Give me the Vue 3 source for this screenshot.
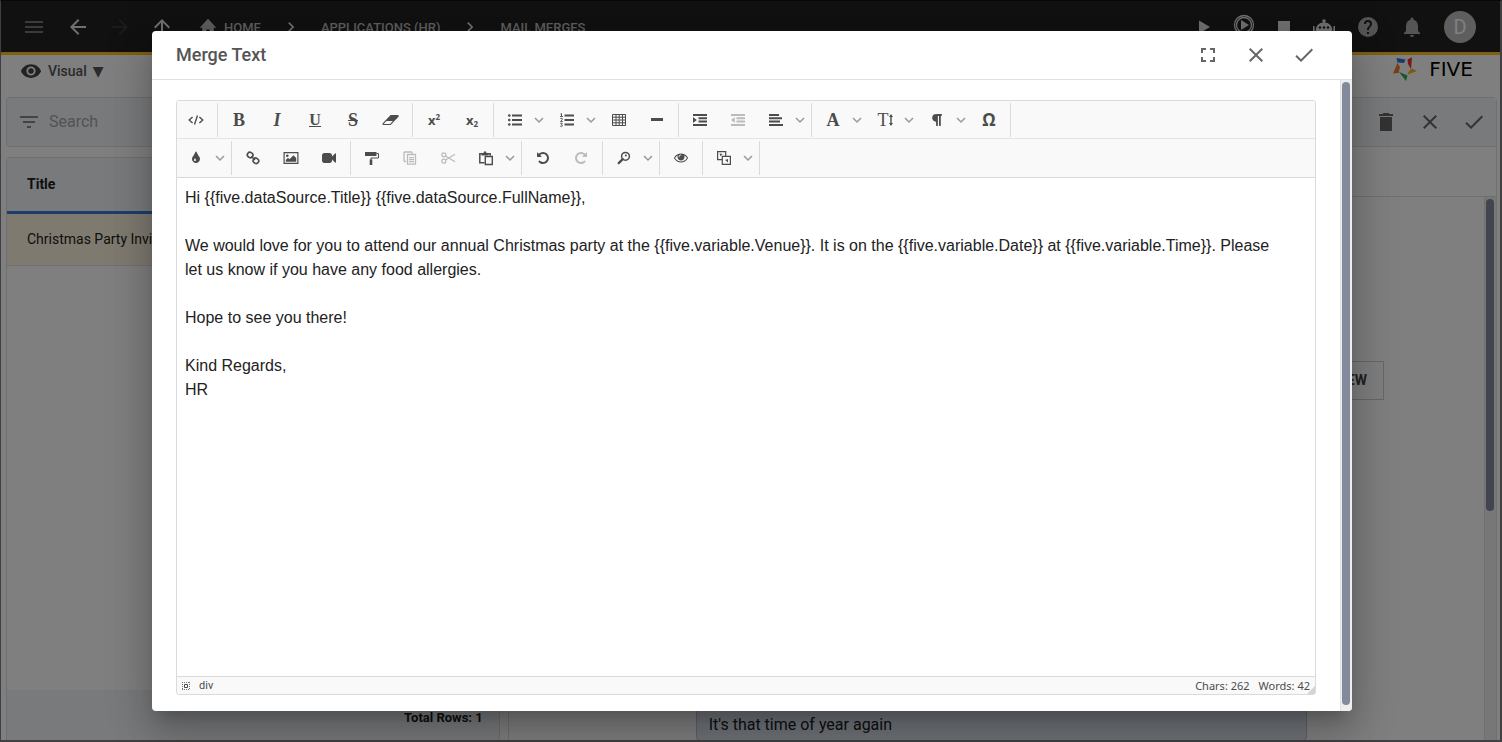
<script setup>
import { ref } from 'vue'

const search = ref('')

const icons = {
  source: '<path d="M4 4L1 7l3 3M10 4l3 3-3 3M8.300 2.500L5.700 11.500" transform="translate(-1 0) scale(1.14 1)" fill="none" stroke="currentColor" stroke-width="1.200"/>',
  eraser: '<path transform="translate(-1 0) scale(.0085 .0078)" d="M832 1408l336-384h-768l-336 384h768zm1013-1077q15 34 9.500 71.500t-30.500 65.500l-896 1024q-38 44-96 44h-768q-38 0-69.500-20.500t-47.500-54.500q-15-34-9.500-71.500t30.500-65.500l896-1024q38-44 96-44h768q38 0 69.500 20.500t47.500 54.500z"/>',
  ul: '<circle cx="1.300" cy="2.500" r="1.300"/><circle cx="1.300" cy="7" r="1.300"/><circle cx="1.300" cy="11.500" r="1.300"/><path d="M4 1.500h10v2H4zM4 6h10v2H4zM4 10.500h10v2H4z"/>',
  ol: '<path d="M4.500 1.500H14v2H4.500zM4.500 6H14v2H4.500zM4.500 10.500H14v2H4.500z"/><path d="M.5 1l1-.5v3M0 3.500h3M.4 5.500h1.800v1.200L.5 8.500h2.300M.3 10.300h2L1.300 11.600q1.500.2.9 1.500-.8.700-2 .1" fill="none" stroke="currentColor" stroke-width=".9"/>',
  table: '<path d="M.5 1.500h13v11H.5zM.5 4.200h13M.5 7h13M.5 9.800h13M4 1.500v11M7.200 1.500v11M10.500 1.500v11" fill="none" stroke="currentColor" stroke-width="1"/>',
  hr: '<path d="M1 5h12v3H1z"/>',
  indent: '<path d="M0 1h14v2H0zM5.500 4.300H14v2H5.500zM5.500 7.600H14v2H5.500zM0 11h14v2H0zM0 4l3.800 3L0 10z"/>',
  outdent: '<path d="M0 1h14v2H0zM5.500 4.300H14v2H5.500zM5.500 7.600H14v2H5.500zM0 11h14v2H0zM3.800 4L0 7l3.800 3z"/>',
  align: '<path d="M0 1h10v2H0zM0 4.300h13v2H0zM0 7.600h11v2H0zM0 11h14v2H0z"/>',
  arrows: '<path d="M2 1l2 3H2.700v6H4l-2 3-2-3h1.300V4H0z"/>',
  paragraph: '<path transform="scale(.0078)" d="M1534 189v73q0 29-18.500 61t-42.500 32q-50 0-54 1-26 6-32 31-3 11-3 64v1152q0 25-18 43t-43 18h-108q-25 0-43-18t-18-43v-1218h-143v1218q0 25-17.500 43t-43.500 18h-108q-26 0-43.500-18t-17.500-43v-496q-147-12-245-59-126-58-192-179-64-117-64-259 0-166 88-286 88-118 209-159 111-37 417-37h479q25 0 43 18t18 43z"/>',
  drop: '<path transform="scale(.0078)" d="M896 1152q0-36-20-69-1-1-15.500-22.500t-25.500-38-25-44-21-50.500q-4-16-21-16t-21 16q-7 23-21 50.500t-25 44-25.500 38-15.500 22.500q-20 33-20 69 0 53 37.500 90.500t90.500 37.500 90.500-37.500 37.500-90.500zm512-128q0 212-150 362t-362 150-362-150-150-362q0-145 81-275 6-9 62.500-90.500t101-151 99.500-178 83-201.500q9-30 34-47t51-17 51.500 17 33.500 47q28 93 83 201.500t99.500 178 101 151 62.500 90.500q81 127 81 275z"/>',
  link: '<g fill="none" stroke="currentColor" stroke-width="1.600"><rect x="1.300" y="1.400" width="5.600" height="5" rx="2.300" transform="rotate(35 4 4)"/><rect x="7" y="7.400" width="5.600" height="5" rx="2.300" transform="rotate(35 10 10)"/><path d="M5.200 5.200l3.800 3.800"/></g>',
  image: '<path d="M-.5 1v12h15V1zm1.200 1.200h12.600v9.600H.7z" fill-rule="evenodd"/><circle cx="3.300" cy="4.800" r="1.300"/><path d="M1.800 10.800V9L4 6.800l1.500 1.500L9.500 4.200l2.700 2.700v3.900z"/>',
  video: '<path transform="scale(.0078)" d="M1792 352v1088q0 42-39 59-13 5-25 5-27 0-45-19l-403-403v166q0 119-84.500 203.500t-203.500 84.500h-704q-119 0-203.500-84.500t-84.500-203.500v-704q0-119 84.500-203.500t203.500-84.500h704q119 0 203.500 84.500t84.500 203.500v165l403-402q18-19 45-19 12 0 25 5 39 17 39 59z"/>',
  brush: '<path d="M0 1h11.500v4H0z"/><path d="M11.500 2.500h2V7H6v2" fill="none" stroke="currentColor"/><path d="M4.700 8.500h2.600V14H4.700z"/>',
  copy: '<path d="M3 10.500H1.700q-.7 0-.7-.7V1.700Q1 1 1.700 1h6.600q.7 0 .7.700V3M4.500 3.500h8v9.700h-8z" fill="none" stroke="currentColor" stroke-width="1.300"/><path d="M6 6h5v1.200H6zM6 8h5v1.200H6zM6 10h5v1.200H6z"/>',
  cut: '<g fill="none" stroke="currentColor" stroke-width="1.300"><circle cx="2.800" cy="3.800" r="2"/><circle cx="2.800" cy="10.200" r="2"/><path d="M4.500 5L14 10.800M4.500 9L14 3.200"/></g>',
  paste: '<path d="M5.500 11.800H.8V2.800h10.400v2" fill="none" stroke="currentColor" stroke-width="1.500"/><path d="M2.500 2.200h2Q4.500.3 6 .3t1.500 1.900h2v2.300h-7z"/><path d="M6.300 5.500h7v8h-7z" fill="none" stroke="currentColor" stroke-width="1.400"/>',
  undo: '<path transform="scale(.0078)" d="M1664 896q0 156-61 298t-164 245-245 164-298 61q-172 0-327-72.500t-264-204.500q-7-10-6.500-22.500t8.500-20.500l137-138q10-9 25-9 16 2 23 12 73 95 179 147t225 52q104 0 198.500-40.500t163.500-109.500 109.500-163.500 40.500-198.500-40.500-198.500-109.500-163.500-163.500-109.500-198.500-40.500q-98 0-188 35.500t-160 101.500l137 138q31 30 14 69-17 40-59 40h-448q-26 0-45-19t-19-45v-448q0-42 40-59 39-17 69 14l130 129q107-101 244.500-156.500t284.500-55.500q156 0 298 61t245 164 164 245 61 298z"/>',
  find: '<circle cx="8.500" cy="5.300" r="3.900" fill="none" stroke="currentColor" stroke-width="1.500"/><path d="M5.700 8.100l-4 4" stroke="currentColor" stroke-width="2.200" stroke-linecap="round"/><circle cx="8.900" cy="4.600" r="1"/>',
  eye: '<path transform="translate(0 -.5) scale(.0078)" d="M1664 960q-152-236-381-353 61 104 61 225 0 185-131.500 316.500t-316.500 131.500-316.500-131.500-131.500-316.500q0-121 61-225-229 117-381 353 133 205 333.500 326.500t434.500 121.500 434.500-121.500 333.500-326.500zm-720-384q0-20-14-34t-34-14q-125 0-214.500 89.500t-89.500 214.500q0 20 14 34t34 14 34-14 14-34q0-86 61-147t147-61q20 0 34-14t14-34zm848 384q0 34-20 69-140 230-376.500 368.500t-499.500 138.500-499.500-139-376.500-368q-20-35-20-69t20-69q140-229 376.500-368t499.500-139 499.500 139 376.500 368q20 35 20 69z"/>',
  translate: '<path d="M5 8.700H.6V.6h8.100V5M5.300 5.300h8.100v8.100H5.300z" fill="none" stroke="currentColor" stroke-width="1.200"/><path d="M2.500 2.500l3 .5-2 2.200zM8 9l3-1v3.500L9.500 10z"/>'
}

const b = (name, label, opts = {}) => ({ name, label, ...opts })
const rows = [
  [
    [b('source', 'Source')],
    [
      b('bold', 'Bold', { text: 'B' }),
      b('italic', 'Italic', { text: 'I' }),
      b('underline', 'Underline', { text: 'U' }),
      b('strike', 'Strike through', { text: 'S' }),
      b('eraser', 'Clear formatting')
    ],
    [b('script', 'Superscript', { text: 'x', sup: '2' }), b('script', 'Subscript', { text: 'x', sub: '2' })],
    [b('ul', 'Bulleted list', { menu: true }), b('ol', 'Numbered list', { menu: true }), b('table', 'Table'), b('hr', 'Horizontal line')],
    [b('indent', 'Increase indent'), b('outdent', 'Decrease indent', { off: true }), b('align', 'Align', { menu: true })],
    [
      b('font', 'Font', { text: 'A', menu: true }),
      b('size', 'Font size', { text: 'T', after: 'arrows', menu: true }),
      b('paragraph', 'Format', { menu: true }),
      b('omega', 'Special characters', { text: 'Ω' })
    ]
  ],
  [
    [b('drop', 'Colour', { menu: true })],
    [b('link', 'Link'), b('image', 'Image'), b('video', 'Video')],
    [b('brush', 'Paint format'), b('copy', 'Copy', { off: true }), b('cut', 'Cut', { off: true }), b('paste', 'Paste', { menu: true })],
    [b('undo', 'Undo'), b('redo', 'Redo', { off: true })],
    [b('find', 'Find', { menu: true })],
    [b('eye', 'Preview')],
    [b('translate', 'Insert field', { menu: true })]
  ]
]
</script>

<template>
  <div class="app">
    <header class="topbar">
      <nav class="nav">
        <button class="icon-btn dim" aria-label="Menu"><svg width="24" height="24" viewBox="0 0 24 24"><path d="M3 6h18v2H3zM3 11h18v2H3zM3 16h18v2H3z" /></svg></button>
        <button class="icon-btn" aria-label="Back"><svg width="24" height="24" viewBox="0 0 24 24"><path d="M20 11H7.800l5.600-5.600L12 4l-8 8 8 8 1.400-1.400L7.800 13H20z" /></svg></button>
        <button class="icon-btn faint" aria-label="Forward"><svg width="24" height="24" viewBox="0 0 24 24"><path d="M4 11h12.200l-5.600-5.600L12 4l8 8-8 8-1.400-1.400 5.600-5.600H4z" /></svg></button>
        <button class="icon-btn" aria-label="Up"><svg width="24" height="24" viewBox="0 0 24 24"><path d="M11 20V7.800l-5.600 5.600L4 12l8-8 8 8-1.400 1.400L13 7.800V20z" /></svg></button>
        <a class="crumb home" href="#"><svg width="20" height="20" viewBox="0 0 24 24"><path d="M10 21v-6h4v6h5v-8h3L12 2 2 13h3v8z" /></svg>HOME</a>
        <svg class="sep" width="20" height="20" viewBox="0 0 24 24"><path d="M10 6L8.600 7.400l4.600 4.600-4.600 4.600L10 18l6-6z" /></svg>
        <a class="crumb" href="#">APPLICATIONS (HR)</a>
        <svg class="sep" width="20" height="20" viewBox="0 0 24 24"><path d="M10 6L8.600 7.400l4.600 4.600-4.600 4.600L10 18l6-6z" /></svg>
        <a class="crumb" href="#">MAIL MERGES</a>
      </nav>
      <div class="tools">
        <button class="icon-btn" aria-label="Run"><svg width="24" height="24" viewBox="0 0 24 24"><path d="M7 5.500v13L18 12z" /></svg></button>
        <button class="icon-btn" aria-label="Debug"><svg width="24" height="24" viewBox="0 0 24 24"><circle cx="12" cy="10" r="9.500" fill="none" stroke="currentColor" stroke-width="1.300" /><circle cx="12" cy="10" r="7.500" fill="none" stroke="currentColor" stroke-width="1.300" /><path d="M9 5v10l8-5z" /></svg></button>
        <button class="icon-btn" aria-label="Stop"><svg width="24" height="24" viewBox="0 0 24 24"><path d="M6 6h12v12H6z" /></svg></button>
        <button class="icon-btn" aria-label="Assistant"><svg width="24" height="24" viewBox="0 0 24 24"><circle cx="12" cy="6" r="1.800" /><path d="M11.400 6h1.200v3h-1.200z" /><path d="M3.500 17q0-9.500 8.500-9.500t8.500 9.500q0 2-8.500 2t-8.500-2zM1 11h1.600v6H1zM21.400 11H23v6h-1.600z" /><g fill="#232323"><circle cx="8" cy="12.500" r="1.200" /><circle cx="12" cy="12.500" r="1.200" /><circle cx="16" cy="12.500" r="1.200" /></g></svg></button>
        <button class="icon-btn mid" aria-label="Help"><svg width="24" height="24" viewBox="0 0 24 24"><path d="M12 2a10 10 0 100 20 10 10 0 000-20zm1 17h-2v-2h2zm2.070-7.750l-.9.920C13.450 12.900 13 13.500 13 15h-2v-.5c0-1.100.45-2.100 1.170-2.830l1.240-1.260A2 2 0 1010 9H8a4 4 0 118 0c0 .88-.36 1.680-.93 2.250z" /></svg></button>
        <button class="icon-btn mid" aria-label="Notifications"><svg width="24" height="24" viewBox="0 0 24 24"><path d="M12 22a2 2 0 002-2h-4a2 2 0 002 2zm6-6v-5c0-3.070-1.640-5.640-4.500-6.320V4a1.500 1.500 0 00-3 0v.68C7.630 5.360 6 7.920 6 11v5l-2 2v1h16v-1z" /></svg></button>
        <button class="avatar" aria-label="Account">D</button>
      </div>
    </header>

    <div class="viewbar">
      <button class="visual">
        <svg width="22" height="22" viewBox="0 0 24 24"><path d="M12 4.500C7 4.500 2.700 7.600 1 12c1.700 4.400 6 7.500 11 7.500s9.300-3.100 11-7.500c-1.700-4.400-6-7.500-11-7.500zM12 17a5 5 0 110-10 5 5 0 010 10zm0-8a3 3 0 100 6 3 3 0 000-6z" /></svg>
        Visual <span class="tri">▼</span>
      </button>
      <div class="logo">
        <svg width="24" height="24" viewBox="0 0 24 24"><path fill="#2f74e0" d="M3.500 1L12.500 2.500 11 6 4.500 5.500z" /><path fill="#f03030" d="M14.500 2.500L19 .3 18 12l-3-5z" /><path fill="#f7b51c" d="M18.500 11.500L24 14l-9.500 3.500 1-2.500z" /><path fill="#27b055" d="M6 15l8.500 3.500L13 24z" /><path fill="#f4802a" d="M4.500 6L7 10l-1.500 6L0 16.500z" /></svg>
        <span>FIVE</span>
      </div>
    </div>

    <main class="columns">
      <section class="left">
        <div class="searchbar">
          <svg width="24" height="24" viewBox="0 0 24 24"><path d="M3 6h18v2H3zM6 11h12v2H6zM10 16h4v2h-4z" /></svg>
          <input v-model="search" type="search" placeholder="Search" aria-label="Search">
        </div>
        <div class="list">
          <table>
            <thead><tr><th>Title</th></tr></thead>
            <tbody><tr><td>Christmas Party Invitation</td></tr></tbody>
          </table>
          <footer>Total Rows: 1</footer>
        </div>
      </section>
      <section class="right">
        <div class="actions">
          <button class="icon-btn" aria-label="Delete"><svg width="24" height="24" viewBox="0 0 24 24"><path d="M6 21h12V7H6zM19 4h-3.500l-1-1h-5l-1 1H5v2h14z" /></svg></button>
          <button class="icon-btn" aria-label="Cancel"><svg width="24" height="24" viewBox="0 0 24 24"><path d="M19 6.400L17.600 5 12 10.600 6.400 5 5 6.400l5.600 5.600L5 17.600 6.400 19l5.600-5.600 5.600 5.600 1.400-1.400-5.600-5.600z" /></svg></button>
          <button class="icon-btn" aria-label="Save"><svg width="24" height="24" viewBox="0 0 24 24"><path d="M9 16.200L4.800 12l-1.400 1.400L9 19 21 7l-1.400-1.400z" /></svg></button>
        </div>
        <div class="tabs"></div>
        <div class="detail">
          <div class="form">
            <button class="view">VIEW</button>
            <div class="message">It's that time of year again</div>
          </div>
          <div class="track"><div class="thumb"></div></div>
        </div>
      </section>
    </main>

    <div class="overlay">
      <div class="dialog" role="dialog" aria-labelledby="dialog-title">
        <header class="dialog-head">
          <h2 id="dialog-title">Merge Text</h2>
          <button class="icon-btn" aria-label="Full screen"><svg width="24" height="24" viewBox="0 0 24 24"><path d="M5 10h2V7h3V5H5zM14 5v2h3v3h2V5zM7 14H5v5h5v-2H7zM17 17h-3v2h5v-5h-2z" /></svg></button>
          <button class="icon-btn" aria-label="Close"><svg width="24" height="24" viewBox="0 0 24 24"><path d="M19 6.400L17.600 5 12 10.600 6.400 5 5 6.400l5.600 5.600L5 17.600 6.400 19l5.600-5.600 5.600 5.600 1.400-1.400-5.600-5.600z" /></svg></button>
          <button class="icon-btn" aria-label="Accept"><svg width="24" height="24" viewBox="0 0 24 24"><path d="M9 16.200L4.800 12l-1.400 1.400L9 19 21 7l-1.400-1.400z" /></svg></button>
        </header>
        <div class="dialog-body">
          <div class="editor">
            <div class="toolbar" role="toolbar">
              <div v-for="(row, r) in rows" :key="r" class="row">
                <div v-for="(group, g) in row" :key="g" class="group">
                  <button v-for="item in group" :key="item.label" class="tool" :class="{ off: item.off, wide: item.menu }" :disabled="item.off" :aria-label="item.label">
                    <span class="face">
                      <span v-if="item.text" class="glyph" :class="item.name">{{ item.text }}<sup v-if="item.sup">{{ item.sup }}</sup><sub v-if="item.sub">{{ item.sub }}</sub></span>
                      <svg v-if="item.after" width="4" height="14" viewBox="0 0 4 14" v-html="icons[item.after]"></svg>
                      <svg v-if="item.name === 'redo'" width="14" height="14" viewBox="0 0 14 14"><g transform="translate(14 0) scale(-1 1)" v-html="icons.undo"></g></svg>
                      <svg v-else-if="!item.text" width="14" height="14" viewBox="0 0 14 14" v-html="icons[item.name]"></svg>
                    </span>
                    <svg v-if="item.menu" class="chev" width="10" height="10" viewBox="0 0 10 10"><path d="M1 3l4 4 4-4" /></svg>
                  </button>
                </div>
              </div>
            </div>
            <div class="content" contenteditable="true" role="textbox" aria-label="Merge text" spellcheck="false">
              <div>Hi &#123;&#123;five.dataSource.Title&#125;&#125; &#123;&#123;five.dataSource.FullName&#125;&#125;,</div>
              <div><br></div>
              <div>We would love for you to attend our annual Christmas party at the &#123;&#123;five.variable.Venue&#125;&#125;. It is on the &#123;&#123;five.variable.Date&#125;&#125; at &#123;&#123;five.variable.Time&#125;&#125;. Please let us know if you have any food allergies.</div>
              <div><br></div>
              <div>Hope to see you there!</div>
              <div><br></div>
              <div>Kind Regards,</div>
              <div>HR</div>
            </div>
            <footer class="status">
              <svg width="8" height="8" viewBox="0 0 8 8"><path d="M0 .5h8M0 7.500h8M.5 0v8M7.500 0v8" fill="none" stroke="#777" stroke-dasharray="1 1" /><path d="M2.500 2.500h3v3h-3z" fill="none" stroke="#4c4c4c" /></svg>
              <span class="path">div</span>
              <span>Chars: 262</span>
              <span>Words: 42</span>
              <i class="grip"></i>
            </footer>
          </div>
          <div class="track"><div class="thumb"></div></div>
        </div>
      </div>
    </div>
  </div>
</template>

<style>
html, body { margin: 0; }
</style>

<style scoped>
* { box-sizing: border-box; }
.app { position: relative; display: flex; flex-direction: column; height: 100vh; overflow: hidden; background: #fff; font-family: Roboto, "Liberation Sans", sans-serif; color: #212121; }
button { padding: 0; border: 0; background: none; color: inherit; font: inherit; }
svg { display: block; flex: none; fill: currentColor; overflow: visible; }

.topbar { display: flex; flex: none; justify-content: space-between; height: 55px; padding: 2px 26px 0 22px; border-bottom: 3px solid #ffc021; background: #222; color: #e0e0e0; }
.nav, .tools { display: flex; align-items: center; }
.icon-btn { display: flex; }
.nav .icon-btn { margin-right: 18px; }
.nav .dim { margin-right: 20px; }
.dim { color: #777; }
.faint { color: #383838; }
.mid { color: #aaa; }
.crumb { display: flex; align-items: center; gap: 6px; color: #bbb; font-size: 13px; font-weight: 500; text-decoration: none; }
.home { margin-left: 6px; }
.sep { margin: 0 20px; }
.tools { gap: 16px; }
.tools .mid { margin-left: 4px; }
.avatar { width: 32px; height: 32px; margin-left: 4px; border-radius: 50%; background: #bdbdbd; color: #fff; font-size: 20px; }

.viewbar { display: flex; flex: none; justify-content: space-between; height: 42px; padding: 0 22px 0 20px; }
.visual { display: flex; align-items: center; gap: 6px; height: 32px; color: #555; font-size: 14px; font-weight: 500; }
.visual svg { color: #444; }
.tri { font-family: "DejaVu Sans", sans-serif; font-size: 14px; }
.logo { display: flex; align-items: center; gap: 5px; height: 28px; color: #000; font-family: "DejaVu Sans", sans-serif; font-size: 20px; }
.logo span { width: 58px; text-align: center; }

.columns { display: flex; flex: 1; gap: 8px; min-height: 0; padding: 0 5px 0 6px; }
.left { display: flex; flex: 1; flex-direction: column; gap: 10px; }
.right { display: flex; flex: 2; flex-direction: column; border: 1px solid #dcdfe2; border-radius: 4px 4px 0 0; }
.searchbar { display: flex; flex: none; align-items: center; gap: 8px; height: 50px; padding: 0 10px; border: 1px solid #dcdfe2; border-radius: 4px; background: #f1f5f8; color: #888; }
.searchbar input { flex: 1; min-width: 0; height: 24px; padding: 0 0 2px; border: 0; outline: 0; background: none; color: #666; font: 16px Roboto, sans-serif; }
.searchbar input::placeholder { color: #a4a8ab; opacity: 1; }
.list { display: flex; flex: 1; flex-direction: column; border: 1px solid #dcdfe2; border-radius: 4px 4px 0 0; }
table { width: 100%; border-collapse: separate; border-spacing: 0; font-size: 14px; text-align: left; }
th { height: 56px; padding: 0 20px 2px; border-bottom: 3px solid #3b7dd8; background: #f1f5f8; font-weight: 700; }
td { height: 52px; padding: 0 20px 2px; border-bottom: 1px solid #e0e0e0; background: #fff5e0; }
.list footer { height: 51px; margin-top: auto; padding: 20px 16px 0; background: #f1f5f8; font-size: 13px; font-weight: 700; line-height: 16px; text-align: right; }
.actions { display: flex; flex: none; align-items: center; justify-content: flex-end; gap: 20px; height: 49px; padding-right: 10px; border-bottom: 1px solid #dcdfe2; background: #f1f5f8; color: #666; }
.tabs { flex: none; height: 50px; border-bottom: 1px solid #dcdfe2; }
.detail { display: flex; flex: 1; min-height: 0; }
.form { display: flex; flex: 1; flex-direction: column; padding: 164px 100px 0 187px; }
.view { align-self: flex-end; height: 39px; padding: 0 16px 2px; border: 1px solid #cfcfcf; color: #444; font-size: 14px; font-weight: 700; }
.message { margin: auto 77px 0 0; padding: 10px 12px 3px; border: 1px solid #b9c5d3; border-radius: 4px; background: #dfe7f2; font-size: 16px; line-height: 24px; }

.track { flex: none; width: 12px; padding: 2px 2px 6px 1px; border-left: 1px solid #e0e0e0; background: #eee; }
.track .thumb { width: 8px; border-radius: 4px; background: #838a9c; }
.detail .thumb { height: 312px; }

.overlay { position: absolute; inset: 0; display: flex; padding: 30px 148px 29px 151px; border: 1px solid #404042; border-top-color: #080808; border-right-width: 2px; border-bottom-width: 2px; background: rgba(0, 0, 0, .5); }
.dialog { display: flex; flex-direction: column; width: 100%; max-width: 1200px; margin: 0 auto; overflow: hidden; border-radius: 4px; background: #fff; box-shadow: 0 11px 15px -7px rgba(0, 0, 0, .2), 0 24px 38px 3px rgba(0, 0, 0, .14), 0 9px 46px 8px rgba(0, 0, 0, .12); }
.dialog-head { display: flex; flex: none; align-items: center; gap: 24px; height: 49px; padding: 0 36px 0 24px; border-bottom: 1px solid #e0e0e0; color: #666; }
h2 { flex: 1; margin: 0; padding-bottom: 2px; color: #555; font-size: 18px; font-weight: 500; }
.dialog-body { display: flex; flex: 1; min-height: 0; }
.dialog-body .track .thumb { height: 100%; }
.editor { display: flex; flex: 1; flex-direction: column; margin: 20px 24px 16px; border: 1px solid #dadada; border-radius: 3px; color: #4c4c4c; }
.toolbar { background: #f9f9f9; border-bottom: 1px solid #dadada; border-radius: 3px 3px 0 0; }
.row { display: flex; height: 37px; }
.row + .row { border-top: 1px solid #e4e4e4; height: 39px; }
.group { display: flex; height: 34px; margin-top: 2px; padding: 0 2px; border-right: 1px solid #dadada; }
.group:first-child { padding-left: 0; }
.tool { display: flex; align-items: center; width: 38px; color: #4c4c4c; }
.tool.wide { width: 52px; }
.tool.off { color: #bcbcbc; }
.face { display: flex; align-items: center; justify-content: center; width: 38px; }
.glyph { font: bold 18px/20px "Liberation Serif", serif; }
.italic { font-style: italic; }
.size { font-weight: 400; }
.underline { border-bottom: 1px solid #4c4c4c; font-size: 16px; line-height: 12px; }
.strike { text-decoration: line-through; }
.script { font: bold 13px/20px "Open Sans", sans-serif; }
.script sup, .script sub { font-size: 8px; line-height: 8px; }
.script sub { vertical-align: -2px; }
.omega { font: bold 17px/20px "Open Sans", sans-serif; }
.chev { fill: none; stroke: #999; stroke-width: 1.5px; }
.content { flex: 1; padding: 8px 30px 8px 8px; outline: 0; color: #222; font: 16px/24px "Liberation Sans", Arial, sans-serif; }
.status { position: relative; display: flex; flex: none; align-items: center; gap: 9px; height: 18px; padding: 0 5px; border-top: 1px solid #dadada; border-radius: 0 0 3px 3px; background: #f9f9f9; font: 11px/16px "Noto Sans", "Open Sans", sans-serif; }
.path { flex: 1; font-family: Roboto, sans-serif; }
.grip { position: absolute; right: 0; bottom: 0; border: 4px solid #d4d4d4; border-top-color: transparent; border-left-color: transparent; }
</style>
